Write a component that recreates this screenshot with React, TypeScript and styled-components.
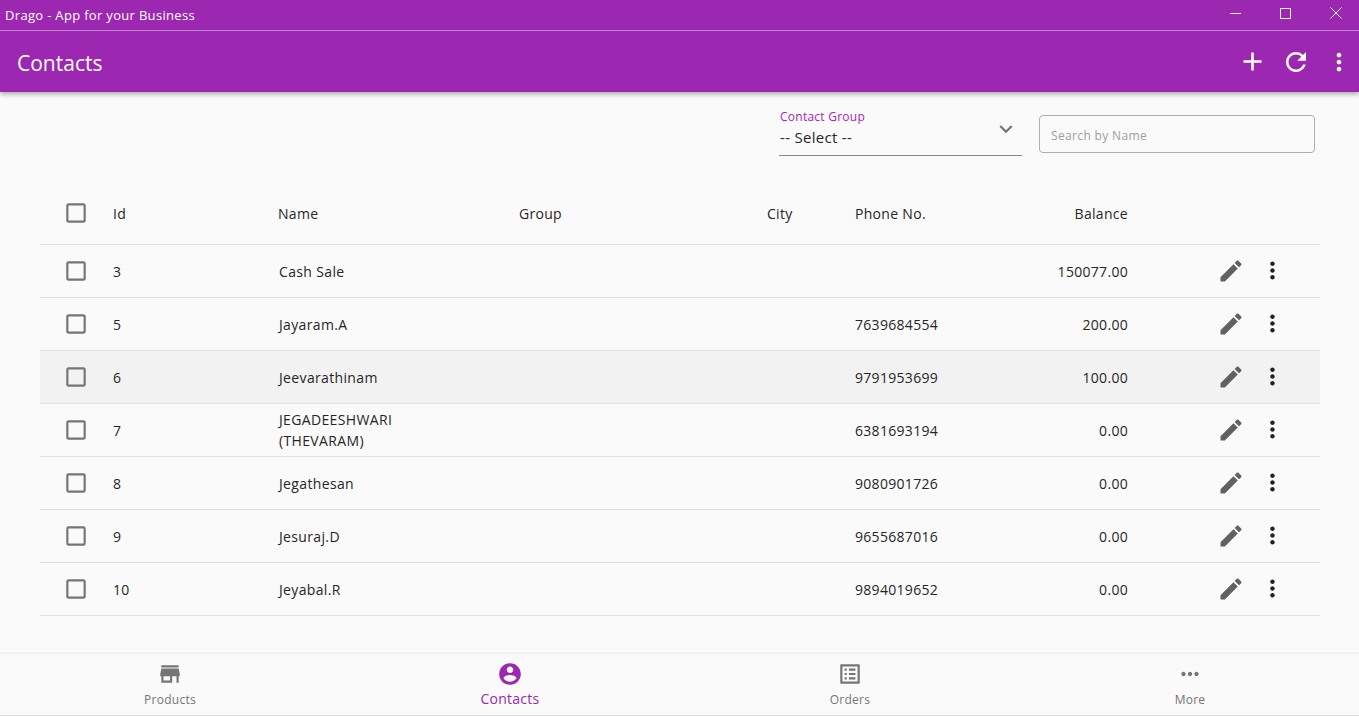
import React from "react";
import styled, { createGlobalStyle } from "styled-components";

const Global = createGlobalStyle`
  html, body { margin: 0; padding: 0; background: #fafafa; }
  body { font-family: "Open Sans", "Noto Sans", sans-serif; color: #262626; }
  * { box-sizing: border-box; }
`;

const Page = styled.div`
  width: 1359px;
  height: 716px;
  display: flex;
  flex-direction: column;
  overflow: hidden;
  background: #fafafa;
`;

const Header = styled.header`
  background: #9c27b0;
  color: #fff;
  box-shadow: 0 2px 5px rgba(0, 0, 0, 0.35);
  position: relative;
  z-index: 1;
`;

const TitleBar = styled.div`
  height: 31px;
  display: flex;
  align-items: center;
  justify-content: space-between;
  padding-left: 5px;
  border-bottom: 1px solid #c087cc;
  font-size: 13px;
  letter-spacing: 0.32px;
`;

const WindowButtons = styled.div`
  display: flex;
  height: 30px;
`;

const WindowButton = styled.div<{ $close?: boolean }>`
  width: 50px;
  display: flex;
  align-items: center;
  justify-content: center;
  padding: 0 0 4px ${(p) => (p.$close ? "4px" : "3px")};
`;

const AppBar = styled.div`
  height: 61px;
  display: flex;
  align-items: center;
  justify-content: space-between;
  padding-left: 17px;
`;

const AppTitle = styled.h1`
  margin: 0;
  padding-top: 2px;
  font-size: 21px;
  font-weight: 400;
`;

const AppActions = styled.div`
  display: flex;
  align-items: center;
`;

const AppAction = styled.div<{ $width: number }>`
  width: ${(p) => p.$width}px;
  height: 44px;
  display: flex;
  align-items: center;
  justify-content: center;
`;

const Main = styled.main`
  flex: 1;
  padding: 0 39px 0 40px;
`;

const Filters = styled.div`
  display: flex;
  justify-content: flex-end;
  align-items: flex-start;
  gap: 17px;
  padding: 16px 5px 0 0;
  height: 98px;
`;

const SelectField = styled.div`
  width: 243px;
  height: 48px;
  border-bottom: 1px solid #8a8a8a;
  position: relative;
  padding-left: 1px;
`;

const SelectLabel = styled.div`
  font-size: 12px;
  line-height: 18px;
  letter-spacing: 0.25px;
  color: #a626bc;
`;

const SelectValue = styled.div`
  font-size: 15px;
  line-height: 22px;
  letter-spacing: 0.3px;
`;

const SelectChevron = styled.svg`
  position: absolute;
  right: 3px;
  top: 8px;
  width: 26px;
  height: 26px;
  fill: #757575;
`;

const SearchBox = styled.input`
  width: 276px;
  height: 38px;
  margin-top: 7px;
  border: 1px solid #aeaeae;
  border-radius: 4px;
  background: transparent;
  padding: 3px 11px 0;
  font-family: inherit;
  font-size: 12px;
  letter-spacing: 0.35px;
  outline: none;
  &::placeholder { color: #9e9e9e; opacity: 1; }
`;

const Row = styled.div<{ $head?: boolean; $hover?: boolean }>`
  display: grid;
  grid-template-columns: 73px 165px 241px 248px 88px 135px 138px 123px 42px 1fr;
  align-items: center;
  height: ${(p) => (p.$head ? "55px" : "53px")};
  padding-bottom: ${(p) => (p.$head ? "8px" : "0")};
  border-bottom: 1px solid #e0e0e0;
  font-size: 14px;
  line-height: 21px;
  letter-spacing: 0.3px;
  background: ${(p) => (p.$hover ? "#f2f2f2" : "transparent")};
`;

const BoxCell = styled.div`
  padding-left: 23px;
  display: flex;
  margin-top: -1px;
`;

const Cell = styled.div<{ $right?: boolean }>`
  text-align: ${(p) => (p.$right ? "right" : "left")};
`;

const NameCell = styled(Cell)`
  max-width: 130px;
  padding-left: 1px;
  letter-spacing: 0.35px;
`;

const EditCell = styled.div`
  display: flex;
  justify-content: flex-end;
  padding-right: 6px;
  margin-top: -1px;
`;

const MenuCell = styled.div`
  display: flex;
  justify-content: center;
  margin-top: -1px;
`;

const BottomNav = styled.nav`
  height: 64px;
  display: grid;
  grid-template-columns: repeat(4, 340px);
  border-top: 2px solid #f3f3f3;
  border-bottom: 1px solid #d8d8d8;
`;

const NavItem = styled.div<{ $active?: boolean }>`
  display: flex;
  flex-direction: column;
  align-items: center;
  padding-top: 7px;
  font-size: ${(p) => (p.$active ? "14px" : "12px")};
  line-height: 18px;
  letter-spacing: 0.25px;
  color: ${(p) => (p.$active ? "#9c27b0" : "#757575")};
`;

const NavLabel = styled.span<{ $active?: boolean }>`
  margin-top: ${(p) => (p.$active ? "3px" : "4px")};
`;

const Icon = styled.svg<{ $size: number; $color: string }>`
  width: ${(p) => p.$size}px;
  height: ${(p) => p.$size}px;
  fill: ${(p) => p.$color};
  display: block;
  flex: none;
`;

const P = {
  box: "M19 5v14H5V5h14m0-2H5c-1.1 0-2 .9-2 2v14c0 1.1.9 2 2 2h14c1.1 0 2-.9 2-2V5c0-1.1-.9-2-2-2z",
  edit: "M3 17.25V21h3.75L17.81 9.94l-3.75-3.75L3 17.25zM20.71 7.04c.39-.39.39-1.02 0-1.41l-2.34-2.34c-.39-.39-1.02-.39-1.41 0l-1.83 1.83 3.75 3.75 1.83-1.83z",
  vert: "M12 8c1.1 0 2-.9 2-2s-.9-2-2-2-2 .9-2 2 .9 2 2 2zm0 2c-1.1 0-2 .9-2 2s.9 2 2 2 2-.9 2-2-.9-2-2-2zm0 6c-1.1 0-2 .9-2 2s.9 2 2 2 2-.9 2-2-.9-2-2-2z",
  add: "M19 13h-6v6h-2v-6H5v-2h6V5h2v6h6v2z",
  refresh: "M17.65 6.35C16.2 4.9 14.21 4 12 4c-4.42 0-7.99 3.58-7.99 8s3.57 8 7.99 8c3.73 0 6.84-2.55 7.73-6h-2.08c-.82 2.33-3.04 4-5.65 4-3.31 0-6-2.69-6-6s2.69-6 6-6c1.66 0 3.14.69 4.22 1.78L13 11h7V4l-2.35 2.35z",
  store: "M20 4H4v2h16V4zm1 10v-2l-1-5H4l-1 5v2h1v6h10v-6h4v6h2v-6h1zm-9 4H6v-4h6v4z",
  account: "M12 2C6.48 2 2 6.48 2 12s4.48 10 10 10 10-4.48 10-10S17.52 2 12 2zm0 3c1.66 0 3 1.34 3 3s-1.34 3-3 3-3-1.34-3-3 1.34-3 3-3zm0 14.2c-2.5 0-4.71-1.28-6-3.22.03-1.99 4-3.08 6-3.08 1.99 0 5.97 1.09 6 3.08-1.29 1.94-3.5 3.22-6 3.22z",
  list: "M19 5v14H5V5h14m1.1-2H3.9c-.5 0-.9.4-.9.9v16.2c0 .4.4.9.9.9h16.2c.4 0 .9-.5.9-.9V3.9c0-.5-.5-.9-.9-.9zM11 7h6v2h-6V7zm0 4h6v2h-6v-2zm0 4h6v2h-6zM7 7h2v2H7zm0 4h2v2H7zm0 4h2v2H7z",
  horiz: "M6 10c-1.1 0-2 .9-2 2s.9 2 2 2 2-.9 2-2-.9-2-2-2zm12 0c-1.1 0-2 .9-2 2s.9 2 2 2 2-.9 2-2-.9-2-2-2zm-6 0c-1.1 0-2 .9-2 2s.9 2 2 2 2-.9 2-2-.9-2-2-2z",
  chevron: "M7.41 8.59L12 13.17l4.59-4.58L18 10l-6 6-6-6 1.41-1.41z",
};

const Glyph = ({ d, size, color }: { d: string; size: number; color: string }) => (
  <Icon $size={size} $color={color} viewBox="0 0 24 24"><path d={d} /></Icon>
);

const rows = [
  { id: "3", name: "Cash Sale", phone: "", balance: "150077.00" },
  { id: "5", name: "Jayaram.A", phone: "7639684554", balance: "200.00" },
  { id: "6", name: "Jeevarathinam", phone: "9791953699", balance: "100.00", hover: true },
  { id: "7", name: "JEGADEESHWARI (THEVARAM)", phone: "6381693194", balance: "0.00" },
  { id: "8", name: "Jegathesan", phone: "9080901726", balance: "0.00" },
  { id: "9", name: "Jesuraj.D", phone: "9655687016", balance: "0.00" },
  { id: "10", name: "Jeyabal.R", phone: "9894019652", balance: "0.00" },
];

const nav = [
  { label: "Products", d: P.store },
  { label: "Contacts", d: P.account, active: true },
  { label: "Orders", d: P.list },
  { label: "More", d: P.horiz },
];

export default function App() {
  return (
    <Page>
      <Global />
      <Header>
        <TitleBar>
          <span>Drago - App for your Business</span>
          <WindowButtons>
            <WindowButton>
              <svg width="11" height="11" viewBox="0 0 11 11"><path d="M0 5.5h11" stroke="#fff" fill="none" /></svg>
            </WindowButton>
            <WindowButton>
              <svg width="11" height="11" viewBox="0 0 11 11"><rect x=".5" y=".5" width="10" height="10" stroke="#fff" fill="none" /></svg>
            </WindowButton>
            <WindowButton $close>
              <svg width="12" height="12" viewBox="0 0 12 12"><path d="M.5.5l11 11M11.5.5l-11 11" stroke="#fff" fill="none" /></svg>
            </WindowButton>
          </WindowButtons>
        </TitleBar>
        <AppBar>
          <AppTitle>Contacts</AppTitle>
          <AppActions>
            <AppAction $width={44}><Glyph d={P.add} size={31} color="#fff" /></AppAction>
            <AppAction $width={44}><Glyph d={P.refresh} size={30} color="#fff" /></AppAction>
            <AppAction $width={41}><Glyph d={P.vert} size={28} color="#fff" /></AppAction>
          </AppActions>
        </AppBar>
      </Header>
      <Main>
        <Filters>
          <SelectField>
            <SelectLabel>Contact Group</SelectLabel>
            <SelectValue>-- Select --</SelectValue>
            <SelectChevron viewBox="0 0 24 24"><path d={P.chevron} /></SelectChevron>
          </SelectField>
          <SearchBox placeholder="Search by Name" />
        </Filters>
        <Row $head>
          <BoxCell><Glyph d={P.box} size={26} color="#757575" /></BoxCell>
          <Cell>Id</Cell>
          <Cell>Name</Cell>
          <Cell>Group</Cell>
          <Cell>City</Cell>
          <Cell>Phone No.</Cell>
          <Cell $right>Balance</Cell>
        </Row>
        {rows.map((r) => (
          <Row key={r.id} $hover={r.hover}>
            <BoxCell><Glyph d={P.box} size={26} color="#757575" /></BoxCell>
            <Cell>{r.id}</Cell>
            <NameCell>{r.name}</NameCell>
            <Cell />
            <Cell />
            <Cell>{r.phone}</Cell>
            <Cell $right>{r.balance}</Cell>
            <EditCell><Glyph d={P.edit} size={28} color="#616161" /></EditCell>
            <MenuCell><Glyph d={P.vert} size={27} color="#212121" /></MenuCell>
          </Row>
        ))}
      </Main>
      <BottomNav>
        {nav.map((n) => (
          <NavItem key={n.label} $active={n.active}>
            <Glyph d={n.d} size={26} color={n.active ? "#9c27b0" : "#757575"} />
            <NavLabel $active={n.active}>{n.label}</NavLabel>
          </NavItem>
        ))}
      </BottomNav>
    </Page>
  );
}
